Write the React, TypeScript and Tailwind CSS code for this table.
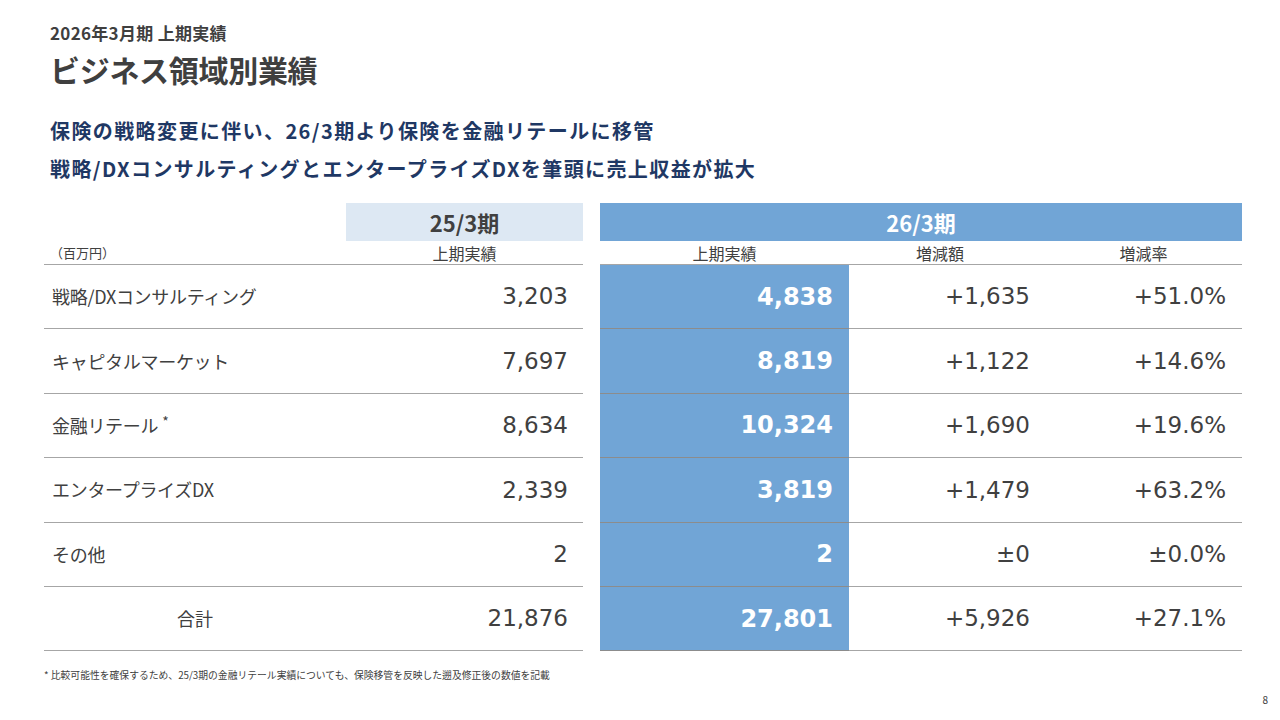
import React from "react";

const rows = [
  { label: "戦略/DXコンサルティング", prev: "3,203", cur: "4,838", diff: "+1,635", rate: "+51.0%" },
  { label: "キャピタルマーケット", prev: "7,697", cur: "8,819", diff: "+1,122", rate: "+14.6%" },
  { label: "金融リテール", star: true, prev: "8,634", cur: "10,324", diff: "+1,690", rate: "+19.6%" },
  { label: "エンタープライズDX", prev: "2,339", cur: "3,819", diff: "+1,479", rate: "+63.2%" },
  { label: "その他", prev: "2", cur: "2", diff: "±0", rate: "±0.0%" },
];

const font = { fontFamily: '"DejaVu Sans", "Noto Sans CJK JP", sans-serif' };

const App = () => {
  return (
    <div
      className="relative h-[720px] w-[1280px] overflow-hidden bg-white text-[#404040]"
      style={{ fontFamily: '"Noto Sans CJK JP", "Noto Sans", sans-serif' }}
    >
      <div className="flex flex-col px-[50px] pt-[22px]">
        <div className="text-[17px] font-bold leading-[22px] tracking-[0.3px] text-[#3f3f3f]">2026年3月期 上期実績</div>
        <div className="mt-[5px] text-[30px] font-bold leading-[40px] tracking-[-0.3px] text-[#3f3f3f]">ビジネス領域別業績</div>
        <div className="mt-[27px] flex flex-col gap-[9px] text-[20px] font-bold leading-[29px] tracking-[1.4px] text-[#1f3864]">
          <div>保険の戦略変更に伴い、26/3期より保険を金融リテールに移管</div>
          <div>戦略/DXコンサルティングとエンタープライズDXを筆頭に売上収益が拡大</div>
        </div>
      </div>

      <div className="ml-[44px] mt-[20px] grid w-[1198px] grid-cols-[302px_237px_17px_249px_196px_197px]">
        {/* header row 1 */}
        <div className="h-[38px]" />
        <div className="flex h-[38px] items-center justify-center bg-[#dde8f3] text-[22px] font-bold text-[#404040]">
          25/3期
        </div>
        <div />
        <div className="col-span-3 flex h-[38px] items-center justify-center bg-[#71a5d6] text-[22px] font-bold text-white">
          26/3期
        </div>

        {/* header row 2 */}
        <div className="flex h-[24px] items-center border-b border-[#a6a6a6] pl-[6px] text-[13px]">（百万円）</div>
        <div className="flex h-[24px] items-center justify-center border-b border-[#a6a6a6] text-[16px]">上期実績</div>
        <div />
        <div className="flex h-[24px] items-center justify-center border-b border-[#a6a6a6] text-[16px]">上期実績</div>
        <div className="flex h-[24px] items-center justify-center border-b border-[#a6a6a6] pr-[14px] text-[16px]">増減額</div>
        <div className="flex h-[24px] items-center justify-center border-b border-[#a6a6a6] text-[16px]">増減率</div>

        {rows.map((r) => (
          <React.Fragment key={r.label}>
            <div className="flex h-[64.4px] items-center border-b border-[#a6a6a6] pl-[8px] text-[18px] tracking-[-0.3px]">
              {r.label}
              {r.star && <span className="mb-[8px] ml-[4px] text-[14px]">*</span>}
            </div>
            <div className="flex h-[64.4px] items-center justify-end border-b border-[#a6a6a6] pr-[15px] text-[23px]" style={font}>
              {r.prev}
            </div>
            <div />
            <div className="flex h-[64.4px] items-center justify-end border-b border-[#8c8c8c] bg-[#71a5d6] pr-[16px] text-[24px] font-bold text-white" style={font}>
              {r.cur}
            </div>
            <div className="flex h-[64.4px] items-center justify-end border-b border-[#a6a6a6] pr-[15px] text-[23px]" style={font}>
              {r.diff}
            </div>
            <div className="flex h-[64.4px] items-center justify-end border-b border-[#a6a6a6] pr-[16px] text-[23px]" style={font}>
              {r.rate}
            </div>
          </React.Fragment>
        ))}

        {/* total */}
        <div className="flex h-[64.4px] items-center justify-center border-b border-[#a6a6a6] text-[18px]">合計</div>
        <div className="flex h-[64.4px] items-center justify-end border-b border-[#a6a6a6] pr-[15px] text-[23px]" style={font}>
          21,876
        </div>
        <div />
        <div className="flex h-[64.4px] items-center justify-end border-b border-[#8c8c8c] bg-[#71a5d6] pr-[16px] text-[24px] font-bold text-white" style={font}>
          27,801
        </div>
        <div className="flex h-[64.4px] items-center justify-end border-b border-[#a6a6a6] pr-[15px] text-[23px]" style={font}>
          +5,926
        </div>
        <div className="flex h-[64.4px] items-center justify-end border-b border-[#a6a6a6] pr-[16px] text-[23px]" style={font}>
          +27.1%
        </div>
      </div>

      <div className="ml-[44px] mt-[17px] text-[9.8px] text-[#404040]">
        * 比較可能性を確保するため、25/3期の金融リテール実績についても、保険移管を反映した遡及修正後の数値を記載
      </div>
      <div className="absolute bottom-[13px] right-[12px] text-[10px] text-[#404040]">8</div>
    </div>
  );
};

export default App;
